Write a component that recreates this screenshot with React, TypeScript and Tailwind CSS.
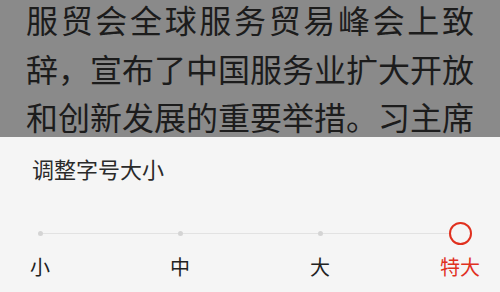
import React from "react";

const stops = ["小", "中", "大", "特大"];

export default function App() {
  return (
    <div
      className="w-[500px] h-[292px] flex flex-col overflow-hidden"
      style={{ fontFamily: '"Noto Sans CJK SC", "Noto Sans", sans-serif' }}
    >
      <div className="h-[137px] shrink-0 bg-[#8a8a8a] overflow-hidden pl-[26px]">
        <div className="-mt-[5px] w-[474px] text-[32px] leading-[48.5px] text-[#1c1c1c] whitespace-nowrap">
          <div className="tracking-[2.67px]">服贸会全球服务贸易峰会上致</div>
          <div>辞，宣布了中国服务业扩大开放</div>
          <div>和创新发展的重要举措。习主席</div>
        </div>
      </div>
      <div className="flex-1 bg-[#f5f5f5] flex flex-col">
        <div className="pl-[32px] pt-[16px] text-[22px] leading-[30px] text-[#2a2a2a]">
          调整字号大小
        </div>
        <div className="relative mt-[39px] grid grid-cols-[80px_80px_80px_80px] gap-x-[60px]">
          <div className="absolute left-[40px] right-[40px] top-[11px] h-px bg-[#e2e2e2]" />
          {stops.map((s, i) => (
            <div key={s} className="relative flex flex-col items-center">
              <div className="h-[22px] flex items-center justify-center">
                {i === 3 ? (
                  <div className="w-[23px] h-[23px] rounded-full border-[2.5px] border-[#e0301e] bg-[#f5f5f5]" />
                ) : (
                  <div className="w-[5px] h-[5px] rounded-full bg-[#d4d4d4]" />
                )}
              </div>
              <div
                className={`mt-[10px] text-[20px] leading-[26px] ${
                  i === 3 ? "text-[#e0301e]" : "text-[#222222]"
                }`}
              >
                {s}
              </div>
            </div>
          ))}
        </div>
      </div>
    </div>
  );
}
